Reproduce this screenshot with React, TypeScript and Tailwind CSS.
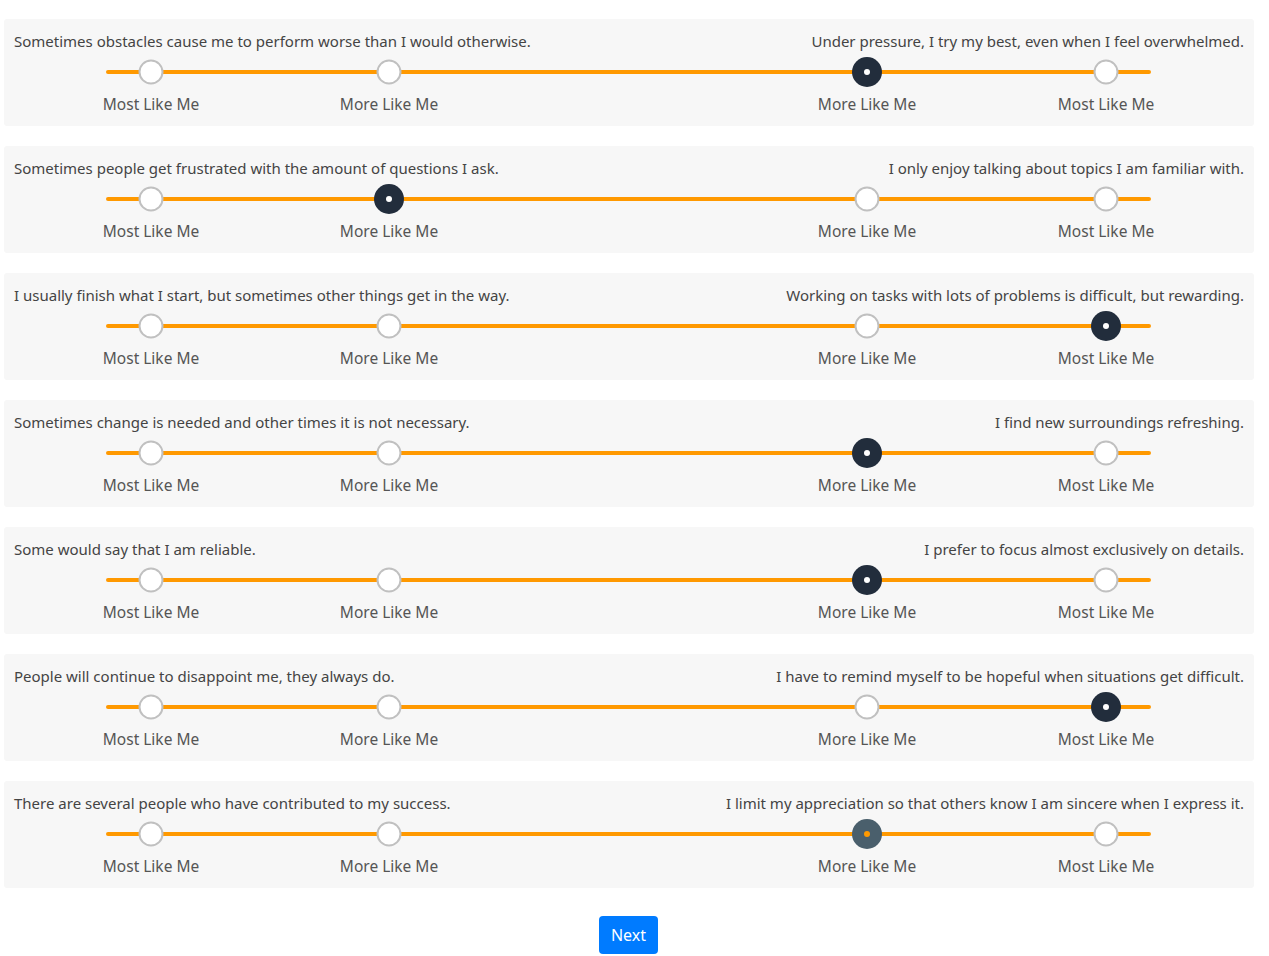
import React from 'react';

interface Item {
  left: string;
  right: string;
  value: number;
  focused?: boolean;
}

const items: Item[] = [
  { left: 'Sometimes obstacles cause me to perform worse than I would otherwise.', right: 'Under pressure, I try my best, even when I feel overwhelmed.', value: 2 },
  { left: 'Sometimes people get frustrated with the amount of questions I ask.', right: 'I only enjoy talking about topics I am familiar with.', value: 1 },
  { left: 'I usually finish what I start, but sometimes other things get in the way.', right: 'Working on tasks with lots of problems is difficult, but rewarding.', value: 3 },
  { left: 'Sometimes change is needed and other times it is not necessary.', right: 'I find new surroundings refreshing.', value: 2 },
  { left: 'Some would say that I am reliable.', right: 'I prefer to focus almost exclusively on details.', value: 2 },
  { left: 'People will continue to disappoint me, they always do.', right: 'I have to remind myself to be hopeful when situations get difficult.', value: 3 },
  { left: 'There are several people who have contributed to my success.', right: 'I limit my appreciation so that others know I am sincere when I express it.', value: 2, focused: true },
];

const marks = [
  { label: 'Most Like Me', pos: 'left-[45px]' },
  { label: 'More Like Me', pos: 'left-[283px]' },
  { label: 'More Like Me', pos: 'left-[761px]' },
  { label: 'Most Like Me', pos: 'left-[1000px]' },
];

const Handle: React.FC<{ active: boolean; focused?: boolean }> = ({ active, focused }) => {
  if (active) {
    return (
      <div className={`w-[30px] h-[30px] rounded-full flex items-center justify-center ${focused ? 'bg-[#4a5f6c]' : 'bg-[#222d3c]'}`}>
        <div className={`w-[6px] h-[6px] rounded-full ${focused ? 'bg-[#ff9900]' : 'bg-white'}`}></div>
      </div>
    );
  }
  return <div className="w-[25px] h-[25px] rounded-full bg-white border-2 border-[#c0c0c0]"></div>;
};

const SliderCard: React.FC<{ item: Item }> = ({ item }) => (
  <div className="bg-[#f7f7f7] rounded-[3px] h-[107px] pt-[11px] px-[10px]">
    <div className="flex justify-between text-[15px] leading-[22px] text-[#444]">
      <span>{item.left}</span>
      <span>{item.right}</span>
    </div>
    {/* Track with handles */}
    <div className="relative w-[1045px] h-[4px] ml-[92px] mt-[18px] bg-[#ff9900] rounded-full">
      {marks.map((m, i) => (
        <div key={i} className={`absolute top-1/2 -translate-x-1/2 -translate-y-1/2 ${m.pos}`}>
          <Handle active={item.value === i} focused={item.focused} />
        </div>
      ))}
    </div>
    {/* Marks */}
    <div className="relative w-[1045px] h-[22px] ml-[92px] mt-[19px]">
      {marks.map((m, i) => (
        <span key={i} className={`absolute top-0 -translate-x-1/2 whitespace-nowrap text-[15.5px] leading-[22px] text-[#555] ${m.pos}`}>
          {m.label}
        </span>
      ))}
    </div>
  </div>
);

export default function App() {
  return (
    <div className="min-h-screen bg-white font-['Noto_Sans',sans-serif]">
      <div className="ml-[4px] w-[1250px] pt-[19px] flex flex-col gap-[20px]">
        {items.map((item, i) => (
          <SliderCard key={i} item={item} />
        ))}
      </div>
      <div className="w-[1257px] flex justify-center mt-[28px]">
        <button className="w-[59px] h-[38px] bg-[#007bff] rounded-[4px] text-white text-[16px]">Next</button>
      </div>
    </div>
  );
}
